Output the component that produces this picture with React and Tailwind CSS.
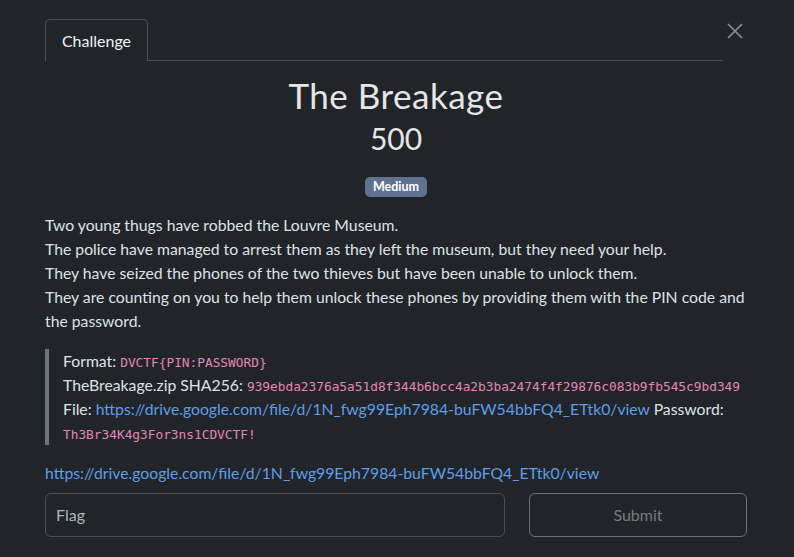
export default function App() {
  const link = "https://drive.google.com/file/d/1N_fwg99Eph7984-buFW54bbFQ4_ETtk0/view";
  const mono = "font-['DejaVu_Sans_Mono',monospace] text-[12.8px] leading-none text-[#e685b5]";
  return (
    <div className="min-h-[557px] w-full bg-[#212529] font-['Lato',sans-serif] text-[15.75px] text-[#dee2e6]">
      <div className="pl-[45px] pr-[47px] pt-[19px]">
        <div className="flex items-start">
          <div className="flex w-[678px] border-b border-[#4a4e54]">
            <div className="-mb-px flex h-[42px] w-[103px] items-center justify-center rounded-t-[5px] border border-b-0 border-[#4a4e54] bg-[#212529] text-[16px] text-[#f1f3f5]">
              Challenge
            </div>
          </div>
          <button className="ml-[4px] mt-[4px] flex h-[16px] w-[16px] items-center justify-center">
            <svg width="16" height="16" viewBox="0 0 16 16">
              <path d="M1 1L15 15M15 1L1 15" stroke="#8d9095" strokeWidth="1.6" />
            </svg>
          </button>
        </div>

        <div className="mt-[13px] flex flex-col items-center">
          <h2 className="text-[35px] leading-[42px] tracking-[0.5px] text-[#e6e6e6]">The Breakage</h2>
          <h3 className="mt-[4px] text-[30px] leading-[36px] text-[#e6e6e6]">500</h3>
          <span className="mt-[21px] rounded-[5px] bg-[#5f7391] px-[8px] py-[3px] text-[12.5px] font-bold leading-[14px] text-white">
            Medium
          </span>
        </div>

        <div className="mt-[16px]">
          <p className="leading-[24px]">
            Two young thugs have robbed the Louvre Museum.
            <br />
            The police have managed to arrest them as they left the museum, but they need your help.
            <br />
            They have seized the phones of the two thieves but have been unable to unlock them.
            <br />
            They are counting on you to help them unlock these phones by providing them with the PIN code and the password.
          </p>

          <blockquote className="mt-[16px] border-l-[4px] border-[#6c757d] pl-[14px] leading-[24px]">
            <div>
              Format: <code className={mono}>DVCTF{"{"}PIN:PASSWORD{"}"}</code>
            </div>
            <div>
              TheBreakage.zip SHA256:{" "}
              <code className={mono}>939ebda2376a5a51d8f344b6bcc4a2b3ba2474f4f29876c083b9fb545c9bd349</code>
            </div>
            <div>
              File: <a className="text-[#5f9de8]">{link}</a> Password:{" "}
              <code className={mono}>Th3Br34K4g3For3ns1CDVCTF!</code>
            </div>
          </blockquote>

          <p className="mt-[16px] leading-[24px]">
            <a className="text-[#5f9de8]">{link}</a>
          </p>
        </div>

        <div className="mt-[8px] flex gap-[24px]">
          <div className="flex h-[44px] w-[460px] items-center rounded-[6px] border border-[#4a4e54] px-[10px] text-[16px] text-[#adb5bd]">
            Flag
          </div>
          <button className="flex h-[44px] w-[218px] items-center justify-center rounded-[6px] border border-[#6c7278] text-[16px] text-[#767b81]">
            Submit
          </button>
        </div>
      </div>
    </div>
  );
}
